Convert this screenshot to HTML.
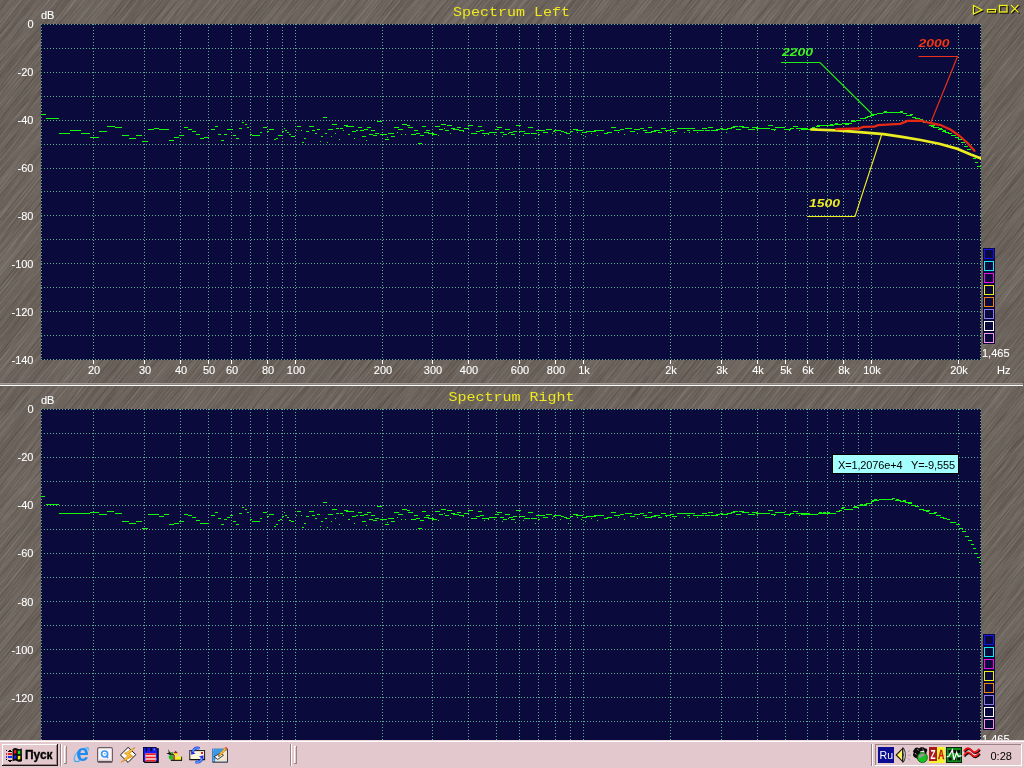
<!DOCTYPE html>
<html><head><meta charset="utf-8"><title>Spectrum</title>
<style>
html,body{margin:0;padding:0}
body{width:1024px;height:768px;overflow:hidden;position:relative;background:#6b635c;font-family:"Liberation Sans",sans-serif}
svg text{font-family:"Liberation Sans",sans-serif}
.lab text{font-size:11px;fill:#fff;stroke:#fff;stroke-width:0.1px}
.lab text.ttl{font-family:"Liberation Mono",monospace;font-size:12.6px;fill:#eee81e;stroke:none}
svg text{opacity:0.999}
text.ann{font:italic bold 11.6px "Liberation Sans",sans-serif}
#tb{position:absolute;left:0;top:740px;width:1024px;height:28px;background:#e3c9cd}
#tb text{opacity:0.999}
</style></head><body>
<svg width="1024" height="768" style="position:absolute;left:0;top:0" shape-rendering="crispEdges">
<defs><filter id="wood" x="0" y="0" width="100%" height="100%" color-interpolation-filters="sRGB">
<feTurbulence type="fractalNoise" baseFrequency="0.035 0.8" numOctaves="2" seed="7" result="n1"/>
<feTurbulence type="fractalNoise" baseFrequency="0.006 0.09" numOctaves="2" seed="3" result="n2"/>
<feComposite in="n1" in2="n2" operator="arithmetic" k1="0" k2="0.62" k3="0.38" k4="0" result="n"/>
<feColorMatrix in="n" type="matrix" values="0.25 0 0 0 0.312  0.25 0 0 0 0.280  0.25 0 0 0 0.250  0 0 0 0 1"/>
</filter>
<pattern id="h1" width="40" height="3" patternUnits="userSpaceOnUse" patternTransform="rotate(-51)"><rect width="40" height="1" fill="#1a120a" opacity="0.10"/></pattern>
<pattern id="h2" width="40" height="7" patternUnits="userSpaceOnUse" patternTransform="rotate(-51)"><rect width="40" height="1" y="2" fill="#fff" opacity="0.05"/><rect width="40" height="1.4" y="5" fill="#000" opacity="0.07"/></pattern>
<clipPath id="c1"><rect x="41" y="24" width="940" height="336"/></clipPath>
<clipPath id="c2"><rect x="41" y="409" width="940" height="336"/></clipPath>
</defs>
<g transform="rotate(-51 512 384)"><rect x="-300" y="-400" width="1700" height="1700" filter="url(#wood)"/></g>
<rect width="1024" height="768" fill="url(#h1)" shape-rendering="auto"/><rect width="1024" height="768" fill="url(#h2)" shape-rendering="auto"/>
<g class="lab">
<rect x="41" y="24" width="940" height="336" fill="#0a0a3c"/>
<path d="M41 24.5H981M41 48.5H981M41 72.5H981M41 96.5H981M41 120.5H981M41 144.5H981M41 168.5H981M41 191.5H981M41 215.5H981M41 239.5H981M41 263.5H981M41 287.5H981M41 311.5H981M41 335.5H981M41 359.5H981" stroke="#62ae90" stroke-width="1" stroke-dasharray="1 2" fill="none"/>
<path d="M41.5 24V360M980.5 24V360M93.5 24V360M144.5 24V360M180.5 24V360M208.5 24V360M231.5 24V360M250.5 24V360M267.5 24V360M282.5 24V360M295.5 24V360M382.5 24V360M432.5 24V360M468.5 24V360M496.5 24V360M519.5 24V360M538.5 24V360M555.5 24V360M570.5 24V360M583.5 24V360M670.5 24V360M721.5 24V360M757.5 24V360M785.5 24V360M807.5 24V360M827.5 24V360M843.5 24V360M858.5 24V360M871.5 24V360M958.5 24V360" stroke="#62ae90" stroke-width="1" stroke-dasharray="1 2" fill="none"/>
<text x="94" y="374" text-anchor="middle">20</text>
<text x="145" y="374" text-anchor="middle">30</text>
<text x="181" y="374" text-anchor="middle">40</text>
<text x="209" y="374" text-anchor="middle">50</text>
<text x="232" y="374" text-anchor="middle">60</text>
<text x="268" y="374" text-anchor="middle">80</text>
<text x="296" y="374" text-anchor="middle">100</text>
<text x="383" y="374" text-anchor="middle">200</text>
<text x="433" y="374" text-anchor="middle">300</text>
<text x="469" y="374" text-anchor="middle">400</text>
<text x="520" y="374" text-anchor="middle">600</text>
<text x="556" y="374" text-anchor="middle">800</text>
<text x="584" y="374" text-anchor="middle">1k</text>
<text x="671" y="374" text-anchor="middle">2k</text>
<text x="722" y="374" text-anchor="middle">3k</text>
<text x="758" y="374" text-anchor="middle">4k</text>
<text x="786" y="374" text-anchor="middle">5k</text>
<text x="808" y="374" text-anchor="middle">6k</text>
<text x="844" y="374" text-anchor="middle">8k</text>
<text x="872" y="374" text-anchor="middle">10k</text>
<text x="959" y="374" text-anchor="middle">20k</text>
<path d="M93.5 360v4M144.5 360v4M180.5 360v4M208.5 360v4M231.5 360v4M267.5 360v4M295.5 360v4M382.5 360v4M432.5 360v4M468.5 360v4M519.5 360v4M555.5 360v4M583.5 360v4M670.5 360v4M721.5 360v4M757.5 360v4M785.5 360v4M807.5 360v4M843.5 360v4M871.5 360v4M958.5 360v4" stroke="#fff" stroke-width="1" fill="none"/>
<text x="33.5" y="28" text-anchor="end">0</text>
<text x="33.5" y="76" text-anchor="end">-20</text>
<text x="33.5" y="124" text-anchor="end">-40</text>
<text x="33.5" y="172" text-anchor="end">-60</text>
<text x="33.5" y="220" text-anchor="end">-80</text>
<text x="33.5" y="268" text-anchor="end">-100</text>
<text x="33.5" y="316" text-anchor="end">-120</text>
<text x="33.5" y="364" text-anchor="end">-140</text>
<text x="41" y="19">dB</text>
<text x="997" y="374">Hz</text>
<text x="982" y="357">1,465</text>
<text x="453.0" y="16" class="ttl" textLength="117.0" lengthAdjust="spacingAndGlyphs">Spectrum Left</text>
<rect x="983" y="248" width="12" height="12" fill="#0a0a3c"/>
<rect x="984.5" y="249.5" width="9" height="9" fill="none" stroke="#1414f0" stroke-width="1"/>
<rect x="983" y="260" width="12" height="12" fill="#0a0a3c"/>
<rect x="984.5" y="261.5" width="9" height="9" fill="none" stroke="#10ecf0" stroke-width="1"/>
<rect x="983" y="272" width="12" height="12" fill="#0a0a3c"/>
<rect x="984.5" y="273.5" width="9" height="9" fill="none" stroke="#f010dc" stroke-width="1"/>
<rect x="983" y="284" width="12" height="12" fill="#0a0a3c"/>
<rect x="984.5" y="285.5" width="9" height="9" fill="none" stroke="#f0f010" stroke-width="1"/>
<rect x="983" y="296" width="12" height="12" fill="#0a0a3c"/>
<rect x="984.5" y="297.5" width="9" height="9" fill="none" stroke="#f08410" stroke-width="1"/>
<rect x="983" y="308" width="12" height="12" fill="#0a0a3c"/>
<rect x="984.5" y="309.5" width="9" height="9" fill="none" stroke="#8c7cec" stroke-width="1"/>
<rect x="983" y="320" width="12" height="12" fill="#0a0a3c"/>
<rect x="984.5" y="321.5" width="9" height="9" fill="none" stroke="#ffffff" stroke-width="1"/>
<rect x="983" y="332" width="12" height="12" fill="#0a0a3c"/>
<rect x="984.5" y="333.5" width="9" height="9" fill="none" stroke="#f498e4" stroke-width="1"/>
<rect x="0" y="383" width="1023" height="1" fill="#a69a98"/><rect x="0" y="384" width="1023" height="1" fill="#8c827e"/><rect x="0" y="385" width="1023" height="1" fill="#ffffff"/>
<rect x="41" y="409" width="940" height="337" fill="#0a0a3c"/>
<path d="M41 409.5H981M41 433.5H981M41 457.5H981M41 481.5H981M41 505.5H981M41 529.5H981M41 553.5H981M41 577.5H981M41 601.5H981M41 625.5H981M41 649.5H981M41 673.5H981M41 697.5H981M41 721.5H981M41 745.5H981" stroke="#62ae90" stroke-width="1" stroke-dasharray="1 2" fill="none"/>
<path d="M41.5 409V746M980.5 409V746M93.5 409V746M144.5 409V746M180.5 409V746M208.5 409V746M231.5 409V746M250.5 409V746M267.5 409V746M282.5 409V746M295.5 409V746M382.5 409V746M432.5 409V746M468.5 409V746M496.5 409V746M519.5 409V746M538.5 409V746M555.5 409V746M570.5 409V746M583.5 409V746M670.5 409V746M721.5 409V746M757.5 409V746M785.5 409V746M807.5 409V746M827.5 409V746M843.5 409V746M858.5 409V746M871.5 409V746M958.5 409V746" stroke="#62ae90" stroke-width="1" stroke-dasharray="1 2" fill="none"/>
<text x="94" y="760" text-anchor="middle">20</text>
<text x="145" y="760" text-anchor="middle">30</text>
<text x="181" y="760" text-anchor="middle">40</text>
<text x="209" y="760" text-anchor="middle">50</text>
<text x="232" y="760" text-anchor="middle">60</text>
<text x="268" y="760" text-anchor="middle">80</text>
<text x="296" y="760" text-anchor="middle">100</text>
<text x="383" y="760" text-anchor="middle">200</text>
<text x="433" y="760" text-anchor="middle">300</text>
<text x="469" y="760" text-anchor="middle">400</text>
<text x="520" y="760" text-anchor="middle">600</text>
<text x="556" y="760" text-anchor="middle">800</text>
<text x="584" y="760" text-anchor="middle">1k</text>
<text x="671" y="760" text-anchor="middle">2k</text>
<text x="722" y="760" text-anchor="middle">3k</text>
<text x="758" y="760" text-anchor="middle">4k</text>
<text x="786" y="760" text-anchor="middle">5k</text>
<text x="808" y="760" text-anchor="middle">6k</text>
<text x="844" y="760" text-anchor="middle">8k</text>
<text x="872" y="760" text-anchor="middle">10k</text>
<text x="959" y="760" text-anchor="middle">20k</text>
<path d="M93.5 746v4M144.5 746v4M180.5 746v4M208.5 746v4M231.5 746v4M267.5 746v4M295.5 746v4M382.5 746v4M432.5 746v4M468.5 746v4M519.5 746v4M555.5 746v4M583.5 746v4M670.5 746v4M721.5 746v4M757.5 746v4M785.5 746v4M807.5 746v4M843.5 746v4M871.5 746v4M958.5 746v4" stroke="#fff" stroke-width="1" fill="none"/>
<text x="33.5" y="413" text-anchor="end">0</text>
<text x="33.5" y="461" text-anchor="end">-20</text>
<text x="33.5" y="509" text-anchor="end">-40</text>
<text x="33.5" y="557" text-anchor="end">-60</text>
<text x="33.5" y="606" text-anchor="end">-80</text>
<text x="33.5" y="654" text-anchor="end">-100</text>
<text x="33.5" y="702" text-anchor="end">-120</text>
<text x="33.5" y="750" text-anchor="end">-140</text>
<text x="41" y="404">dB</text>
<text x="997" y="760">Hz</text>
<text x="982" y="743">1,465</text>
<text x="448.5" y="401" class="ttl" textLength="126.0" lengthAdjust="spacingAndGlyphs">Spectrum Right</text>
<rect x="983" y="634" width="12" height="12" fill="#0a0a3c"/>
<rect x="984.5" y="635.5" width="9" height="9" fill="none" stroke="#1414f0" stroke-width="1"/>
<rect x="983" y="646" width="12" height="12" fill="#0a0a3c"/>
<rect x="984.5" y="647.5" width="9" height="9" fill="none" stroke="#10ecf0" stroke-width="1"/>
<rect x="983" y="658" width="12" height="12" fill="#0a0a3c"/>
<rect x="984.5" y="659.5" width="9" height="9" fill="none" stroke="#f010dc" stroke-width="1"/>
<rect x="983" y="670" width="12" height="12" fill="#0a0a3c"/>
<rect x="984.5" y="671.5" width="9" height="9" fill="none" stroke="#f0f010" stroke-width="1"/>
<rect x="983" y="682" width="12" height="12" fill="#0a0a3c"/>
<rect x="984.5" y="683.5" width="9" height="9" fill="none" stroke="#f08410" stroke-width="1"/>
<rect x="983" y="694" width="12" height="12" fill="#0a0a3c"/>
<rect x="984.5" y="695.5" width="9" height="9" fill="none" stroke="#8c7cec" stroke-width="1"/>
<rect x="983" y="706" width="12" height="12" fill="#0a0a3c"/>
<rect x="984.5" y="707.5" width="9" height="9" fill="none" stroke="#ffffff" stroke-width="1"/>
<rect x="983" y="718" width="12" height="12" fill="#0a0a3c"/>
<rect x="984.5" y="719.5" width="9" height="9" fill="none" stroke="#f498e4" stroke-width="1"/>
</g>
<g clip-path="url(#c1)">
<path d="M41 114.5H46M46 118.5H59M59 133.5H70M70 130.5H81M81 133.5H90M90 137.5H99M99 131.5H107M107 126.5H115M115 127.5H122M122 135.5H129M129 138.5H136M136 135.5H142M142 141.5H148M148 129.5H154M154 128.5H159M159 129.5H169M169 140.5H174M174 137.5H179M179 135.5H184M184 127.5H188M188 129.5H192M192 131.5H196M196 134.5H200M200 138.5H204M204 137.5H209M211 129.5H215M215 126.5H218M218 134.5H221M221 140.5H224M224 134.5H227M227 129.5H233M233 135.5H236M236 138.5H239M239 128.5H242M242 122.5H244M245 124.5H247M247 127.5H249M250 134.5H252M252 135.5H260M260 132.5H262M263 127.5H267M267 131.5H269M269 129.5H274M274 139.5H276M276 138.5H278M278 135.5H282M282 131.5H284M284 128.5H285M285 130.5H287M287 132.5H289M289 134.5H291M291 136.5H295M297 126.5H301M296 130.5H297M301 130.5H302M302 142.5H304M304 138.5H306M306 131.5H309M309 126.5H314M312 130.5H315M315 133.5H317M317 129.5H320M320 141.5H321M321 136.5H323M323 117.5H327M325 133.5H327M327 142.5H328M328 129.5H333M331 136.5H332M332 124.5H337M335 133.5H336M336 128.5H339M339 139.5H340M340 128.5H343M343 130.5H344M344 125.5H348M346 126.5H354M348 134.5H350M352 131.5H356M354 138.5H355M356 130.5H358M358 127.5H362M360 130.5H364M362 136.5H366M364 129.5H368M366 140.5H367M367 127.5H371M369 134.5H373M371 130.5H375M373 135.5H377M375 133.5H379M377 121.5H382M380 134.5H387M385 139.5H389M387 137.5H388M388 133.5H394M391 136.5H395M394 127.5H399M397 132.5H398M398 129.5H403M401 134.5H402M402 124.5H407M405 134.5H406M407 125.5H410M408 127.5H413M411 134.5H416M414 130.5H418M416 133.5H420M418 143.5H422M420 135.5H424M422 126.5H424M424 126.5H426M426 130.5H430M424 132.5H429M428 133.5H434M432 134.5H437M432 135.5H433M435 126.5H440M438 135.5H439M439 129.5H443M441 124.5H446M444 128.5H445M445 130.5H449M447 125.5H452M450 133.5H451M451 128.5H455M453 129.5H459M457 127.5H461M459 130.5H464M463 131.5H464M464 128.5H469M468 125.5H473M471 133.5H477M476 131.5H480M478 126.5H482M480 130.5H484M482 133.5H489M484 135.5H485M488 134.5H489M489 132.5H497M494 134.5H495M495 129.5H499M497 127.5H502M500 132.5H504M502 136.5H503M503 134.5H507M505 129.5H510M508 133.5H509M509 132.5H513M511 134.5H515M513 131.5H517M515 137.5H516M516 125.5H521M519 131.5H525M523 135.5H524M524 133.5H530M528 127.5H533M531 133.5H537M535 138.5H536M536 130.5H545M538 134.5H540M543 132.5H548M546 129.5H552M552 133.5H553M553 131.5H555M554 130.5H561M561 131.5H564M564 132.5H567M566 133.5H570M570 131.5H573M573 129.5H578M576 130.5H583M582 132.5H587M586 131.5H596M594 130.5H604M604 133.5H608M607 132.5H612M611 127.5H616M614 130.5H620M620 129.5H624M625 128.5H632M630 131.5H635M634 129.5H640M640 128.5H644M643 130.5H647M645 132.5H652M648 127.5H652M651 131.5H656M654 130.5H660M658 132.5H662M661 128.5H666M665 130.5H671M670 129.5H674M672 131.5H677M677 128.5H680M560 134.5H561M568 138.5H569M577 132.5H578M581 134.5H582M585 136.5H586M591 133.5H592M597 135.5H598M618 132.5H619M624 134.5H625M637 133.5H638M666 131.5H667M674 133.5H675M680 128.5H691M687 130.5H690M690 128.5H695M693 130.5H704M702 128.5H707M705 130.5H710M708 127.5H713M711 130.5H718M716 129.5H720M720 128.5H723M722 129.5H728M727 128.5H732M731 127.5H735M733 126.5H738M736 129.5H741M739 126.5H744M742 127.5H749M748 129.5H755M752 127.5H758M756 128.5H761M760 128.5H770M768 125.5H773M771 129.5H776M775 127.5H785M784 129.5H791M790 128.5H794M793 126.5H798M796 128.5H808M684 132.5H685M689 132.5H690M697 132.5H698M726 132.5H727M757 130.5H758M774 130.5H775M789 130.5H790M799 130.5H800M801 129.5H806M806 129.5H812M811 128.5H817M812 127.5H815M816 126.5H820M817 125.5H820M819 125.5H823M823 125.5H829M829 125.5H834M830 124.5H833M834 124.5H838M835 123.5H838M838 124.5H842M842 123.5H846M845 124.5H849M846 123.5H849M848 123.5H852M851 121.5H856M852 120.5H855M856 120.5H860M860 118.5H866M865 117.5H868M867 116.5H871M870 115.5H874M871 114.5H874M873 114.5H877M877 113.5H883M883 112.5H888M884 111.5H887M888 112.5H894M893 112.5H897M896 112.5H900M899 112.5H903M900 111.5H903M903 113.5H907M906 115.5H910M909 115.5H912M910 114.5H913M912 117.5H916M915 118.5H920M919 120.5H924M920 119.5H923M923 122.5H929M929 125.5H932M931 126.5H934M932 125.5H935M933 127.5H939M938 129.5H943M939 128.5H942M942 131.5H946M943 130.5H946M945 132.5H949M948 133.5H952M951 135.5H956M955 137.5H959M958 139.5H962M961 142.5H965M964 146.5H968M967 149.5H971M970 154.5H974M973 158.5H976M975 162.5H978M977 166.5H981M980 168.5H981" stroke="#14fa0c" stroke-width="1" fill="none"/>
<polyline points="811.1,129.5 837.1,130.4 859.4,132.2 883.5,134.1 902.0,136.9 920.6,140.0 939.2,143.7 957.7,148.9 970.7,154.5 981.0,158.5" fill="none" stroke="#ecec22" stroke-width="2.7" stroke-linejoin="round" stroke-linecap="round" shape-rendering="auto"/>
<polyline points="836.2,129.1 859.4,128.5 863.0,126.9 874.2,126.7 878.0,125.1 900.2,123.9 907.6,120.9 920.6,120.7 929.9,123.0 941.0,125.2 950.3,129.5 959.6,136.0 967.0,142.5 974.4,150.8" fill="none" stroke="#e42a14" stroke-width="2.3" stroke-linejoin="round" stroke-linecap="round" shape-rendering="auto"/>
<polyline points="781,62.5 820,62.5 872,114" fill="none" stroke="#24ec12" stroke-width="1.15" shape-rendering="auto"/>
<polyline points="918.5,56.5 957.5,56.5 931,122" fill="none" stroke="#ec3018" stroke-width="1.15" shape-rendering="auto"/>
<polyline points="807,216.5 855,216.5 881.7,134.5" fill="none" stroke="#ecec22" stroke-width="1.15" shape-rendering="auto"/>
<text class="ann" x="782" y="55.6" fill="#3cf222" textLength="31" lengthAdjust="spacingAndGlyphs">2200</text>
<text class="ann" x="918.5" y="47.1" fill="#f03612" textLength="31" lengthAdjust="spacingAndGlyphs">2000</text>
<text class="ann" x="809" y="206.6" fill="#ecec22" textLength="31" lengthAdjust="spacingAndGlyphs">1500</text>
</g>
<g clip-path="url(#c2)">
<path d="M41 496.5H45M46 504.5H59M59 513.5H90M90 512.5H99M99 514.5H107M107 511.5H114M115 513.5H122M122 521.5H129M129 523.5H136M136 521.5H142M142 528.5H148M148 514.5H159M159 516.5H164M164 514.5H169M169 524.5H174M174 523.5H179M179 521.5H184M184 514.5H188M188 515.5H192M192 517.5H196M196 520.5H200M200 523.5H209M211 515.5H215M215 512.5H218M218 518.5H221M221 524.5H224M224 519.5H227M227 517.5H230M230 515.5H233M233 521.5H236M236 524.5H239M239 513.5H242M242 507.5H244M245 509.5H247M247 512.5H249M250 519.5H252M252 521.5H260M260 518.5H262M263 512.5H267M267 516.5H269M269 514.5H274M274 526.5H276M276 524.5H278M278 520.5H280M280 519.5H282M282 516.5H284M284 512.5H285M285 515.5H287M287 517.5H289M289 520.5H291M291 521.5H294" stroke="#14fa0c" stroke-width="1" fill="none"/>
<path d="M297 511.5H301M296 515.5H297M301 515.5H302M302 527.5H304M304 523.5H306M306 516.5H309M309 511.5H314M312 515.5H315M315 518.5H317M317 514.5H320M320 526.5H321M321 521.5H323M323 502.5H327M325 518.5H327M327 527.5H328M328 514.5H333M331 521.5H332M332 509.5H337M335 518.5H336M336 513.5H339M339 524.5H340M340 513.5H343M343 515.5H344M344 510.5H348M346 511.5H354M348 519.5H350M352 516.5H356M354 523.5H355M356 515.5H358M358 512.5H362M360 515.5H364M362 521.5H366M364 514.5H368M366 525.5H367M367 512.5H371M369 519.5H373M371 515.5H375M373 520.5H377M375 518.5H379M377 506.5H382M380 519.5H387M385 524.5H389M387 522.5H388M388 518.5H394M391 521.5H395M394 512.5H399M397 517.5H398M398 514.5H403M401 519.5H402M402 509.5H407M405 519.5H406M407 510.5H410M408 512.5H413M411 519.5H416M414 515.5H418M416 518.5H420M418 528.5H422M420 520.5H424M422 511.5H424M424 511.5H426M426 515.5H430M424 517.5H429M428 518.5H434M432 519.5H437M432 520.5H433M435 511.5H440M438 520.5H439M439 514.5H443M441 509.5H446M444 513.5H445M445 515.5H449M447 510.5H452M450 518.5H451M451 513.5H455M453 514.5H459M457 512.5H461M459 515.5H464M463 516.5H464M464 513.5H469M468 510.5H473M471 518.5H477M476 516.5H480M478 511.5H482M480 515.5H484M482 518.5H489M484 520.5H485M488 519.5H489M489 517.5H497M494 519.5H495M495 514.5H499M497 512.5H502M500 517.5H504M502 521.5H503M503 519.5H507M505 514.5H510M508 518.5H509M509 517.5H513M511 519.5H515M513 516.5H517M515 522.5H516M516 510.5H521M519 516.5H525M523 520.5H524M524 518.5H530M528 512.5H533M531 518.5H537M535 523.5H536M536 515.5H545M538 519.5H540M543 517.5H548M546 514.5H552M552 518.5H553M553 516.5H555M554 515.5H561M561 516.5H564M564 517.5H567M566 518.5H570M570 516.5H573M573 514.5H578M576 515.5H583M582 517.5H587M586 516.5H596M594 515.5H604M604 518.5H608M607 517.5H612M611 512.5H616M614 515.5H620M620 514.5H624M625 513.5H632M630 516.5H635M634 514.5H640M640 513.5H644M643 515.5H647M645 517.5H652M648 512.5H652M651 516.5H656M654 515.5H660M658 517.5H662M661 513.5H666M665 515.5H671M670 514.5H674M672 516.5H677M677 513.5H680M560 519.5H561M568 523.5H569M577 517.5H578M581 519.5H582M585 521.5H586M591 518.5H592M597 520.5H598M618 517.5H619M624 519.5H625M637 518.5H638M666 516.5H667M674 518.5H675M680 513.5H691M687 515.5H690M690 513.5H695M693 515.5H704M702 513.5H707M705 515.5H710M708 512.5H713M711 515.5H718M716 514.5H720M720 513.5H723M722 514.5H728M727 513.5H732M731 512.5H735M733 511.5H738M736 514.5H741M739 511.5H744M742 512.5H749M748 514.5H755M752 512.5H758M756 513.5H761M760 513.5H770M768 510.5H773M771 514.5H776M775 512.5H785M784 514.5H791M790 513.5H794M793 511.5H798M796 513.5H808M684 517.5H685M689 517.5H690M697 517.5H698M726 517.5H727M757 515.5H758M774 515.5H775M789 515.5H790M799 515.5H800M801 514.5H806" stroke="#14fa0c" stroke-width="1" fill="none"/>
<path d="M806 514.5H811M807 513.5H810M810 514.5H813M812 514.5H818M818 513.5H823M819 512.5H822M822 513.5H827M823 512.5H826M826 513.5H832M827 512.5H830M831 513.5H836M836 511.5H840M839 510.5H842M841 508.5H844M842 507.5H845M844 509.5H849M849 509.5H853M853 507.5H859M854 506.5H857M859 505.5H863M860 504.5H863M863 505.5H867M864 504.5H867M866 503.5H872M871 501.5H874M872 500.5H875M873 500.5H877M874 499.5H877M876 500.5H879M879 499.5H883M882 499.5H885M885 499.5H889M889 499.5H893M892 498.5H895M895 500.5H901M896 499.5H899M900 501.5H903M902 501.5H906M903 500.5H906M905 502.5H909M908 503.5H912M909 502.5H912M911 505.5H916M915 506.5H919M919 509.5H924M923 510.5H927M926 511.5H929M927 510.5H930M929 513.5H933M933 513.5H936M934 512.5H937M936 515.5H941M940 517.5H944M943 518.5H947M947 519.5H950M950 522.5H956M956 524.5H960M959 528.5H963M962 531.5H966M965 536.5H969M968 540.5H972M971 544.5H974M973 548.5H976M975 553.5H978M977 557.5H980M979 562.5H981" stroke="#14fa0c" stroke-width="1" fill="none"/>
</g>
<rect x="832.5" y="454.5" width="126" height="19" fill="#a4ffff" stroke="#000" stroke-width="1"/>
<text x="838" y="468.5" style="font:11px 'Liberation Sans',sans-serif" fill="#000" xml:space="preserve" textLength="117" lengthAdjust="spacing">X=1,2076e+4   Y=-9,555</text>
<g transform="translate(1,1)" fill="none" stroke="#0c0a04" stroke-width="1" shape-rendering="auto"><path d="M973.5 5.5V14L982 10Z" stroke-width="1.3"/><rect x="987.5" y="9.5" width="8" height="2.5" stroke-width="1.2"/><rect x="999.5" y="5.5" width="7.5" height="6.5" stroke-width="1.3"/><path d="M1011 5L1018.5 12.5M1018.5 5L1011 12.5" stroke-width="1.1"/></g>
<g transform="translate(0,0)" fill="none" stroke="#f4f41a" stroke-width="1" shape-rendering="auto"><path d="M973.5 5.5V14L982 10Z" stroke-width="1.3"/><rect x="987.5" y="9.5" width="8" height="2.5" stroke-width="1.2"/><rect x="999.5" y="5.5" width="7.5" height="6.5" stroke-width="1.3"/><path d="M1011 5L1018.5 12.5M1018.5 5L1011 12.5" stroke-width="1.1"/></g>
</svg>
<div id="tb">
<svg width="1024" height="28" viewBox="0 740 1024 28" style="position:absolute;left:0;top:0" shape-rendering="crispEdges">
<rect x="0" y="740" width="1024" height="1" fill="#ead6da"/><rect x="0" y="741" width="1024" height="1" fill="#ffffff"/>
<rect x="2" y="744" width="56" height="22" fill="#1a1216"/>
<rect x="2" y="744" width="55" height="21" fill="#ffffff"/>
<rect x="3" y="745" width="54" height="20" fill="#9a8488"/>
<rect x="3" y="745" width="53" height="19" fill="#e3c9cd"/>
<g shape-rendering="auto">
<path d="M12.5 749.2 Q15 747.2 17.3 748.6 Q19.6 750 21.8 748.2 L22 761 Q19.6 762.6 17.3 761.2 Q15 759.8 12.5 761.6 Z" fill="#0c0c0c"/>
<path d="M14 750.6 Q15.2 749.6 16.3 750.2 L16.3 753.6 Q15.2 753 14 754 Z" fill="#f01818"/>
<path d="M17.8 750.6 Q19 751.2 20.3 750.4 L20.3 753.8 Q19 754.6 17.8 754 Z" fill="#18e018"/>
<path d="M14 755.8 Q15.2 754.8 16.3 755.4 L16.3 758.8 Q15.2 758.2 14 759.2 Z" fill="#1820f0"/>
<path d="M17.8 755.8 Q19 756.4 20.3 755.6 L20.3 759 Q19 759.8 17.8 759.2 Z" fill="#f0f018"/>
</g>
<path d="M6 750h1v1h-1zM6 759h1v1h-1zM8 751h4v1h-4zM8 760h4v1h-4zM9 750h2v1h-2zM9 761h2v1h-2z" fill="#0c0c0c"/>
<path d="M6 753h1v2h-1zM8 753h4v2h-4z" fill="#f02020"/>
<path d="M6 756h1v2h-1zM8 756h4v2h-4z" fill="#2030f0"/>
<path d="M9 753.8h2v0.6h-2zM9 756.8h2v0.6h-2z" fill="#fff"/>
<text x="25" y="759" textLength="27.5" lengthAdjust="spacingAndGlyphs" style="font:bold 12.4px 'Liberation Sans',sans-serif" fill="#000" stroke="#000" stroke-width="0.35">Пуск</text>
<rect x="60" y="744" width="1" height="22" fill="#9a8488"/><rect x="61" y="744" width="1" height="22" fill="#fff"/>
<rect x="64" y="746" width="3" height="18" fill="#9a8488"/><rect x="64" y="746" width="2" height="17" fill="#fff"/><rect x="65" y="747" width="1" height="16" fill="#e3c9cd"/>
<rect x="290" y="744" width="1" height="22" fill="#9a8488"/><rect x="291" y="744" width="1" height="22" fill="#fff"/>
<rect x="294" y="746" width="3" height="18" fill="#9a8488"/><rect x="294" y="746" width="2" height="17" fill="#fff"/><rect x="295" y="747" width="1" height="16" fill="#e3c9cd"/>
<rect x="871" y="744" width="1" height="22" fill="#9a8488"/><rect x="872" y="744" width="1" height="22" fill="#fff"/>
<rect x="875" y="744" width="147" height="22" fill="#fff"/>
<rect x="875" y="744" width="146" height="21" fill="#9a8488"/>
<rect x="876" y="745" width="145" height="20" fill="#e3c9cd"/>
<g shape-rendering="auto">
<g transform="translate(74,747)"><path d="M1.2 14.6Q-1.6 10.4 3.4 5.4Q8 1 14.6 0.6" fill="none" stroke="#58b8f8" stroke-width="1.3"/><text x="2.2" y="14.2" style="font:bold 23.5px 'Liberation Sans',sans-serif" fill="#1e8cf0" textLength="12.6" lengthAdjust="spacingAndGlyphs">e</text><path d="M0.6 13.8Q2.6 15.6 6.4 13.4" fill="none" stroke="#48a8f4" stroke-width="1.2"/><path d="M12.2 2.6Q15.6 0.2 14.4 3.6" fill="none" stroke="#58b8f8" stroke-width="1.1"/></g>
<g transform="translate(97,747)"><rect x="0.6" y="0.6" width="14.8" height="14.6" rx="1.6" fill="#fbf3f5" stroke="#6c6068" stroke-width="1.2"/><rect x="1.2" y="12.6" width="13.6" height="1.4" fill="#d8ccd0"/><rect x="0.6" y="14" width="14.8" height="1.6" rx="0.8" fill="#5c5058"/><circle cx="7.6" cy="7" r="3" fill="#fff" stroke="#3c98f0" stroke-width="1.7"/><circle cx="7.9" cy="6.8" r="0.7" fill="#3c98f0"/><path d="M9.2 8.8L11 11" stroke="#3c98f0" stroke-width="1.7"/></g>
<g transform="translate(120,747)"><path d="M8.1 0.4L15.8 7.6L8.1 15.4L0.4 8Z" fill="#fdfdfd" stroke="#141414" stroke-width="1"/><path d="M15 0.4L4.4 6.4L7.8 8.6L1 15.4L12.8 9.2L9.6 6.8Z" fill="#f8a818" stroke="#c07808" stroke-width="0.5"/><path d="M12.6 2.4L6.6 6.6L9.6 8.4L5 12.4" fill="none" stroke="#fcd050" stroke-width="1"/></g>
<g transform="translate(143,747)"><rect x="1.2" y="1.2" width="14.6" height="14.8" fill="#080808"/><path d="M0 0H13L15 2V15H0Z" fill="#080818"/><path d="M0.8 0.8H12.6L14.2 2.4V14.2H0.8Z" fill="#1c1cf0"/><rect x="2.6" y="0.8" width="1.6" height="3.6" fill="#0c0c30"/><rect x="7.2" y="0.8" width="2" height="3.4" fill="#0c0c30"/><rect x="10.6" y="1.4" width="1.4" height="2" fill="#6c8cf8"/><rect x="2.4" y="6.4" width="10.4" height="8" fill="#fdf4f4"/><rect x="2.4" y="6.4" width="10.4" height="1.8" fill="#ec1c24"/><rect x="2.4" y="9.6" width="10.4" height="1.7" fill="#ec1c24"/><rect x="2.4" y="12.7" width="10.4" height="1.7" fill="#ec1c24"/><rect x="12.8" y="11.6" width="0.9" height="0.9" fill="#c8d0ff"/></g>
<g transform="translate(166,747)"><path d="M2.2 2L4 5.6L6 6.2L4.6 7.2L5.4 9.8L3.4 7.6L0.2 6.4L2.8 5.8Z" fill="#101010"/><path d="M7 6.4L9.6 3.8L12.2 6.4Z" fill="#b01424"/><rect x="5" y="5.2" width="2.2" height="1.8" fill="#18b020"/><rect x="7" y="6.4" width="5.2" height="1.9" fill="#f4e820"/><path d="M2.8 8.6H7.4V12.8H4.4L2.8 11Z" fill="#18c424"/><rect x="7.4" y="8.2" width="1.5" height="5.4" fill="#d01818"/><rect x="8.9" y="9.4" width="6.4" height="3.8" fill="#f8f028"/><rect x="15.2" y="9.6" width="0.9" height="4" fill="#101010"/><rect x="4.8" y="12.8" width="11.2" height="1.1" fill="#101010"/><rect x="5" y="7.2" width="3" height="1" fill="#101010"/></g>
<g transform="translate(189,747)"><rect x="0.8" y="3.6" width="14.8" height="9" fill="#fcf8dc" stroke="#181818" stroke-width="1"/><rect x="0.8" y="12" width="15" height="1.2" fill="#101010"/><rect x="12" y="5" width="2" height="2" fill="#f01830"/><path d="M10.6 1.4Q6.4 -0.6 3.8 4.4" fill="none" stroke="#2828e0" stroke-width="2.6"/><path d="M10.6 1.4Q6.4 -0.6 3.8 4.4" fill="none" stroke="#48a8ff" stroke-width="1.3"/><path d="M2 3.4L2.2 7.8L6.6 6.6Z" fill="#2828e0"/><path d="M6.4 14.8Q10.6 16.6 13 11.6" fill="none" stroke="#2828e0" stroke-width="2.6"/><path d="M6.4 14.8Q10.6 16.6 13 11.6" fill="none" stroke="#48a8ff" stroke-width="1.3"/><path d="M14.6 12.6L14.4 8.2L10 9.4Z" fill="#2828e0"/></g>
<g transform="translate(212,747)"><rect x="0.4" y="1.8" width="15.4" height="13.8" fill="#101828"/><rect x="0.4" y="1.8" width="14.6" height="12.8" fill="#3a9ae8"/><path d="M3 14.6C3 9 8 4 15 3.4V14.6Z" fill="#f4e6cc"/><path d="M1 2.6h1v1h-1zM13.4 2.6h1v1h-1zM1 12.8h1v1h-1zM13.2 12.6h1v1h-1z" fill="#8cd0ff"/><path d="M2 9.7L8.1 6.3L11.5 8.3L5.7 12.4Z" fill="#fdfdfd" stroke="#282828" stroke-width="0.9"/><path d="M6.6 8L13 0.8L14.6 2.2L8 9.2Z" fill="#f8a41c" stroke="#b06808" stroke-width="0.4"/><path d="M7.4 8L13.4 1.4" stroke="#fce068" stroke-width="0.6"/><path d="M13 0.8L14 -0.2L15.6 1.2L14.6 2.2Z" fill="#f03838"/><path d="M6.6 8L6 9.8L8 9.2Z" fill="#202020"/></g>
<rect x="878" y="747" width="16" height="16" fill="#0c0c90"/>
<text x="879.5" y="759" textLength="13.5" lengthAdjust="spacingAndGlyphs" style="font:11.5px 'Liberation Sans',sans-serif" fill="#fff">Ru</text>
<g transform="translate(895,747)"><path d="M0.4 8L8 0.4V15.6Z" fill="#101010"/><path d="M2 8L7.2 2.8V13.2Z" fill="#f8f040"/><path d="M3.4 7.4h1v1h-1zM5.2 5.4h1v1h-1zM5.2 9.4h1v1h-1zM6.2 7.4h1v1h-1zM6.2 3.8h0.8v1h-0.8zM6.2 11.2h0.8v1h-0.8z" fill="#fffce0"/><path d="M8 0.6C11 3.6 11 12.4 8 15.4Z" fill="#fdfdfd" stroke="#101010" stroke-width="0.9"/><path d="M8.2 5.8L9 8L8.2 10.2Z" fill="#101010"/><path d="M12.6 5.2L15.2 3.2M13 8.2H16M12.6 11.2L15.2 13.2" stroke="#a89a9e" stroke-width="0.9"/></g>
<g transform="translate(912,747)"><path d="M2 3C3 0 6 0 7 1.6C8.4 -0.4 12 0 13 1.6C15 1 16 3 14.6 5L14 9L9 14L4 11C1 10 0 7 2 6C0.6 5 0.8 3.6 2 3Z" fill="#0c0c0c"/><path d="M5.4 2.2L6.6 3.4M10.4 2L11.6 3.2M3 6.4L4.4 7.4" stroke="#e3c9cd" stroke-width="0.9"/><path d="M8 4.4L12 3.6L12.6 6L9 7Z" fill="#f4f0f0"/><circle cx="10.4" cy="10.6" r="5" fill="#18c020" stroke="#0c5c10" stroke-width="0.8"/><path d="M6.6 9.4C7.6 6.6 12 6 13.6 8C11.6 8.4 9 10.6 7.4 11.4Z" fill="#a09498"/></g>
<rect x="929" y="747" width="16" height="16" fill="#f8f42c"/><rect x="929" y="747" width="8" height="14" fill="#a81c1c"/>
<text x="930.6" y="759.4" textLength="5" lengthAdjust="spacingAndGlyphs" style="font:bold 12px 'Liberation Sans',sans-serif" fill="#fff">Z</text>
<text x="938" y="759.4" textLength="6.4" lengthAdjust="spacingAndGlyphs" style="font:bold 12px 'Liberation Sans',sans-serif" fill="#e81818" stroke="#701010" stroke-width="0.3">A</text>
<g transform="translate(946,747)"><rect x="0" y="0" width="16" height="16" fill="#0c0c0c"/><rect x="0.8" y="0.8" width="14.4" height="14.4" fill="#10901c"/><path d="M2.6 3h3v3h-3zM7 3h3v3h-3zM11.2 3h3v3h-3zM2.6 10.6h3v3h-3zM7 10.6h3v3h-3zM11.2 10.6h3v3h-3z" fill="#0c0c0c"/><path d="M0.6 10L3 9L6.4 3L8 13L10.6 5.6L12.4 9.4L15.6 8.6" fill="none" stroke="#fcfcfc" stroke-width="1.3"/></g>
<g transform="translate(963,746.5)" fill="none" stroke-linecap="round"><path d="M1.4 4.4Q4.8 -0.6 8.4 3.8T16 3M1.4 8.6Q4.8 3.6 8.4 8T16 7.2" stroke="#180808" stroke-width="1.7" transform="translate(0.7,0.9)"/><path d="M1.2 4.2Q4.6 -0.8 8.2 3.6T15.8 2.8M1.2 8.4Q4.6 3.4 8.2 7.8T15.8 7" stroke="#f01418" stroke-width="1.7"/></g>
<text x="990.5" y="759.5" style="font:11px 'Liberation Sans',sans-serif" fill="#000">0:28</text>
</g>
</svg>
</div>
</body></html>
